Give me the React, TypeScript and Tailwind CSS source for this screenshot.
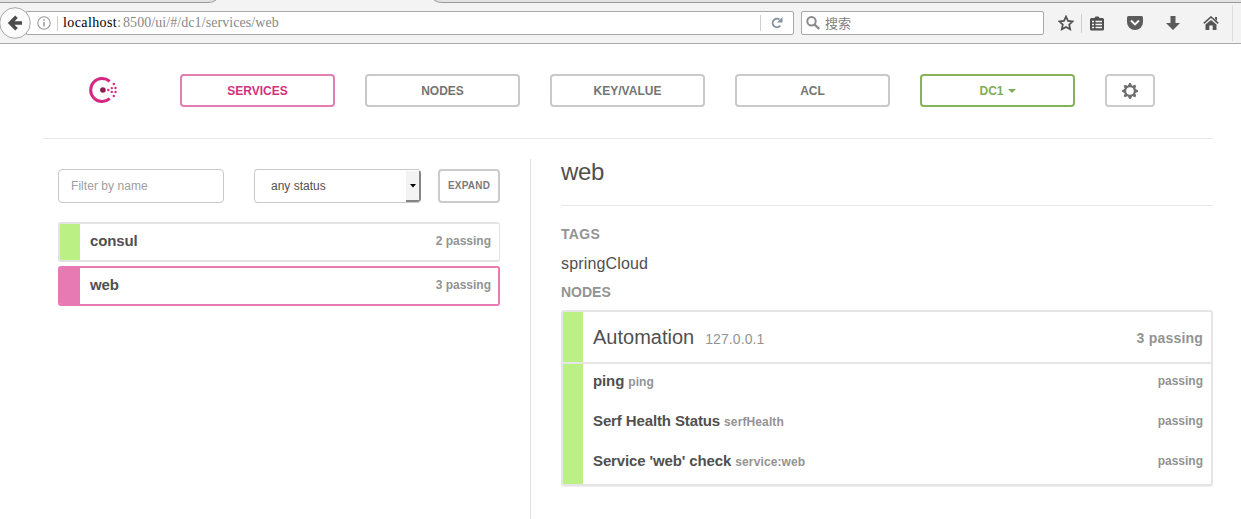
import type { ReactNode } from "react";

function NavButton({ children, tone }: { children: ReactNode; tone: string }) {
  return (
    <button
      className={`flex h-[33px] w-[155px] items-center justify-center rounded-[4px] border-2 bg-white pt-px text-[12px] leading-4 font-bold ${tone}`}
    >
      {children}
    </button>
  );
}

function BrowserBar() {
  return (
    <header className="h-[44px] border-b border-[#a9a9a9] bg-[#f3f3f3]">
      <svg className="block h-[3px] w-full" viewBox="0 0 1241 3" preserveAspectRatio="none">
        <path d="M0 0H216Q213 2.5 208 2.5H0ZM434 0Q437 2.5 442 2.5H1241V0Z" fill="#e3e3e3" />
        <path d="M0 2.5H208Q213 2.5 216 0M434 0Q437 2.5 442 2.5H1241" fill="none" stroke="#9a9a9a" />
      </svg>
      <div className="flex h-[40px] items-center">
        <svg width="31" height="32" viewBox="0 0 31 32" className="relative z-10 shrink-0">
          <circle cx="15" cy="16" r="15.3" fill="#fbfbfb" stroke="#a8a8a8" />
          <path d="M22 16H10.500M16.500 9.800L10.300 16l6.200 6.200" fill="none" stroke="#4c4c4c" strokeWidth="3.600" />
        </svg>
        <div className="-ml-[5px] flex h-6 w-[768px] items-center rounded-r-[2px] border border-[#a9a9a9] bg-white">
          <svg width="14" height="14" viewBox="0 0 14 14" className="ml-[10px] shrink-0">
            <circle cx="7" cy="7" r="6.200" fill="none" stroke="#999" strokeWidth="1.100" />
            <path d="M7 6v4.500M7 3.300v1.400" stroke="#999" strokeWidth="1.500" />
          </svg>
          <span className="ml-[6px] h-[15px] w-px bg-[#d0d0d0]" />
          <span className="ml-[5px] w-[60px] font-['Liberation_Serif',serif] text-[14px] leading-4 tracking-[0.4px] whitespace-nowrap text-black">
            localhost<span className="text-[#888]">:</span>
          </span>
          <span className="font-['Liberation_Serif',serif] text-[14px] leading-4 tracking-[0.07px] whitespace-nowrap text-[#888]">
            8500/ui/#/dc1/services/web
          </span>
          <span className="ml-auto h-4 w-px bg-[#cfcfcf]" />
          <svg width="12" height="12" viewBox="0 0 12 12" className="mr-[10px] ml-[10px] shrink-0">
            <path d="M9.300 8.700A4.300 4.300 0 1 1 8.500 2.500" fill="none" stroke="#8791a0" strokeWidth="1.900" />
            <path d="M11.500 0v5.500H6z" fill="#8791a0" />
          </svg>
        </div>
        <div className="ml-[7px] flex h-6 w-[243px] items-center rounded-[2px] border border-[#a9a9a9] bg-white">
          <svg width="14" height="14" viewBox="0 0 14 14" className="ml-1 shrink-0" fill="none" stroke="#8b8b8b" strokeWidth="2">
            <circle cx="5.500" cy="5.300" r="4.200" />
            <path d="M8.500 8.500l4.700 4.500" strokeWidth="2.400" />
          </svg>
          <span className="ml-[5px] font-['Noto_Sans_CJK_SC',sans-serif] text-[13px] leading-4 text-[#808080]">搜索</span>
        </div>
        <svg width="16" height="16" viewBox="0 0 16 16" className="ml-[14px] shrink-0">
          <path d="M8 1.500l2 4.400 4.700.5-3.500 3.200 1 4.700L8 11.900l-4.200 2.400 1-4.700L1.300 6.400 6 5.900z" fill="none" stroke="#505050" strokeWidth="1.700" />
        </svg>
        <span className="ml-[7px] h-[19px] w-px bg-[#cfcfcf]" />
        <svg width="14" height="15" viewBox="0 0 14 15" className="ml-[8px] shrink-0">
          <path d="M0 3.500Q0 2 1.500 2H4.500L5.500.5h3L9.500 2h3Q14 2 14 3.500v9.500q0 1.500-1.500 1.500h-11Q0 14.500 0 13z" fill="#505050" />
          <path d="M2 5.500h2M2 8.500h2M2 11.500h2M5.500 5.500h6.500M5.500 8.500h6.500M5.500 11.500h6.500" stroke="#f5f5f5" strokeWidth="1.500" />
        </svg>
        <svg width="16" height="14" viewBox="0 0 16 14" className="ml-[23px] shrink-0">
          <path d="M1.500 0h13Q16 0 16 1.500V6A8 8 0 0 1 0 6V1.500Q0 0 1.500 0z" fill="#5b5b5b" />
          <path d="M4 4.500L8 8.400l4-3.900" fill="none" stroke="#f5f5f5" strokeWidth="2" />
        </svg>
        <svg width="14" height="14" viewBox="0 0 14 14" className="ml-[23px] shrink-0">
          <path d="M4.500 0h5v7H14L7 14 0 7h4.500z" fill="#5b5b5b" />
        </svg>
        <svg width="16" height="14" viewBox="0 0 16 14" className="ml-[23px] shrink-0">
          <path d="M.8 7.300L8 1l7.200 6.300" fill="none" stroke="#555" strokeWidth="1.600" />
          <path d="M12 1h2v4l-2-2z" fill="#555" />
          <path d="M2.500 8.500L8 4 13.500 8.500V14H9.700V9.500H6.300V14H2.500z" fill="#555" />
        </svg>
        <span className="ml-[13px] h-[36px] w-px bg-[#dcdcdc]" />
      </div>
    </header>
  );
}

function Logo() {
  return (
    <svg width="28" height="28" viewBox="-0.5 0 28 28" className="mr-[63px] mb-[2px] shrink-0">
      <path d="M20.200 5.300A11.500 11.500 0 1 0 20.200 22.700" fill="none" stroke="#d62783" strokeWidth="3" />
      <circle cx="13.400" cy="14" r="2.800" fill="#8d1f52" />
      <g fill="#d62783">
        <circle cx="18.800" cy="14" r="1.200" />
        <circle cx="22.300" cy="12.100" r="1.200" />
        <circle cx="22.300" cy="15.900" r="1.200" />
        <circle cx="26" cy="12" r="1.200" />
        <circle cx="26" cy="16" r="1.200" />
        <circle cx="24.300" cy="8" r="1.200" />
        <circle cx="24.300" cy="20" r="1.200" />
      </g>
    </svg>
  );
}

function Gear() {
  return (
    <svg width="18" height="18" viewBox="-9 -9 18 18">
      <g fill="#6f6f6f">
        <path d="M-2.200-5L-.8-8H.8L2.200-5V5L.8 8H-.8L-2.200 5z" />
        <path d="M-2.200-5L-.8-8H.8L2.200-5V5L.8 8H-.8L-2.200 5z" transform="rotate(45)" />
        <path d="M-2.200-5L-.8-8H.8L2.200-5V5L.8 8H-.8L-2.200 5z" transform="rotate(90)" />
        <path d="M-2.200-5L-.8-8H.8L2.200-5V5L.8 8H-.8L-2.200 5z" transform="rotate(135)" />
        <circle r="5.800" />
      </g>
      <circle r="3.800" fill="#fff" />
    </svg>
  );
}

function ServiceRow({ name, status, selected }: { name: string; status: string; selected?: boolean }) {
  return (
    <div
      className={`flex h-10 overflow-hidden rounded-[3px] border-2 ${selected ? "border-[#e77ab3]" : "border-r border-[#e2e4e2]"}`}
    >
      <div className={`w-5 ${selected ? "bg-[#e77ab3]" : "bg-[#bbf085]"}`} />
      <div className={`flex flex-1 justify-between bg-white pl-[10px] ${selected ? "pr-[7px]" : "pr-2"}`}>
        <span className="text-[15px] leading-[34px] font-bold tracking-[-0.15px] text-[#505050]">{name}</span>
        <span className="text-[12px] leading-[34px] font-bold text-[#939393]">{status}</span>
      </div>
    </div>
  );
}

const checks = [
  { name: "ping", id: "ping" },
  { name: "Serf Health Status", id: "serfHealth" },
  { name: "Service 'web' check", id: "service:web" },
];

export default function App() {
  return (
    <div className="flex h-[519px] w-[1241px] flex-col overflow-hidden bg-white font-['Liberation_Sans',Arial,sans-serif] text-[#505050]">
      <BrowserBar />
      <nav className="ml-[43px] flex h-[95px] w-[1170px] items-center border-b border-[#e8e8e8] pb-px pl-[46px]">
        <Logo />
        <div className="flex gap-[30px]">
          <NavButton tone="border-[#e07fb0] text-[#d1317f]">SERVICES</NavButton>
          <NavButton tone="border-[#c9c9c9] text-[#747474]">NODES</NavButton>
          <NavButton tone="border-[#c9c9c9] text-[#747474]">KEY/VALUE</NavButton>
          <NavButton tone="border-[#c9c9c9] text-[#747474]">ACL</NavButton>
          <NavButton tone="border-[#86b35a] text-[#7fae58]">
            DC1
            <svg width="8" height="4" viewBox="0 0 8 4" className="ml-[4px]">
              <path d="M0 0h8L4 4z" fill="#7fae58" />
            </svg>
          </NavButton>
          <button className="flex h-[33px] w-[50px] items-center justify-center rounded-[4px] border-2 border-[#cbcbcb]">
            <Gear />
          </button>
        </div>
      </nav>
      <main className="flex flex-1 pt-5 pl-[58px]">
        <section className="w-[442px] pt-[10px]">
          <div className="flex h-[34px]">
            <input
              className="w-[166px] rounded-[4px] border border-[#c8c8c8] px-3 text-[12px] leading-4 tracking-[0.05px] placeholder:text-[#a0a0a0]"
              placeholder="Filter by name"
            />
            <div className="ml-[30px] flex w-[167px] overflow-hidden rounded-[4px] border border-r-0 border-[#c8c8c8]">
              <span className="flex-1 pl-4 text-[12px] leading-8">any status</span>
              <span className="mt-px flex w-[15px] items-center justify-center rounded-br-[3px] border-r-2 border-b-2 border-[#858585] bg-[#f3f3f3]">
                <svg width="6" height="4" viewBox="0 0 6 4">
                  <path d="M0 0h6L3 3.500z" fill="#000" />
                </svg>
              </span>
            </div>
            <button className="ml-[17px] w-[62px] rounded-[4px] border-2 border-[#cbcbcb] text-[10px] leading-4 font-bold tracking-[0.2px] text-[#7a7a7a]">
              EXPAND
            </button>
          </div>
          <div className="mt-[19px] flex flex-col gap-1">
            <ServiceRow name="consul" status="2 passing" />
            <ServiceRow name="web" status="3 passing" selected />
          </div>
        </section>
        <section className="ml-[30px] w-[683px] border-l border-[#e2e2e2] pl-[30px]">
          <h1 className="h-[47px] border-b border-[#e8e8e8] text-[24px] leading-[26px] tracking-[-0.3px]">web</h1>
          <h2 className="mt-[18px] text-[14px] leading-5 font-bold tracking-[0.3px] text-[#939393]">TAGS</h2>
          <p className="mt-[10px] text-[16px] leading-5 tracking-[0.15px]">springCloud</p>
          <h2 className="mt-2 text-[14px] leading-5 font-bold text-[#939393]">NODES</h2>
          <div className="mt-2 h-[176px] overflow-hidden rounded-[3px] border-2 border-[#e5e5e5] shadow-[0_1px_1px_#eeeeee]">
            <div className="flex h-[52px] border-b-2 border-[#e5e5e5]">
              <div className="w-5 bg-[#bbf085]" />
              <div className="flex flex-1 items-baseline pr-2 pl-[10px] leading-[50px]">
                <span className="text-[20px]">Automation</span>
                <span className="ml-[11px] text-[14px] tracking-[0.1px] text-[#939393]">127.0.0.1</span>
                <span className="mt-px ml-auto self-start text-[14px] font-bold tracking-[0.2px] text-[#939393]">3 passing</span>
              </div>
            </div>
            <div className="flex h-[120px]">
              <div className="w-5 bg-[#bbf085]" />
              <div className="flex-1 pr-2 pl-[10px]">
                {checks.map((check) => (
                  <div key={check.id} className="flex h-10 text-[12px] leading-[36px] font-bold text-[#939393]">
                    <span className="text-[15px] leading-[34px] tracking-[-0.12px] text-[#505050]">{check.name}</span>
                    <span className="ml-1 tracking-[0.12px]">{check.id}</span>
                    <span className="ml-auto leading-[34px]">passing</span>
                  </div>
                ))}
              </div>
            </div>
          </div>
        </section>
      </main>
    </div>
  );
}
